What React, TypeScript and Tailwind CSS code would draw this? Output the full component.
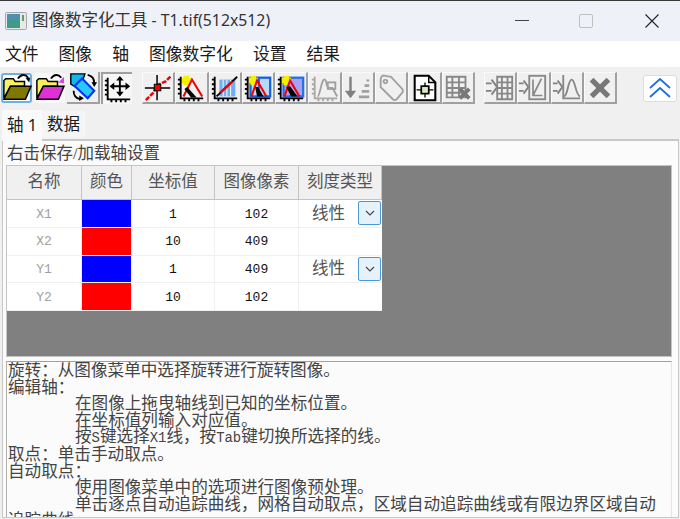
import React from 'react';

const SONG = "font-['Liberation_Serif','Noto_Sans_CJK_SC',serif]";
const COLON = '\uFF1A';
const COMMA = '\uFF0C';

const Axes = ({ c = '#000' }: { c?: string }) => (
  <path d="M5 4V27H29M2 7H5M2 12H5M2 17H5M2 22H5M9 30V27M14 30V27M19 30V27M24 30V27" fill="none" stroke={c} strokeWidth="2" />
);
const Sun = () => <path d="M8 3h6v2h2v6h-2v2H8v-2H6V5h2z" fill="#f4f000" />;

const icons: Record<string, React.ReactNode> = {
  open: (
    <>
      <path d="M17 6C20 1 25 1 28 5" fill="none" stroke="#000" strokeWidth="2" />
      <path d="M25 5h5l-1 5z" fill="#000" />
      <path d="M2 27V8l2-2h8l2 3h10v5H9L2 27z" fill="#f8f060" stroke="#000" strokeWidth="1.6" />
      <path d="M2 28 9 14h22l-6 14z" fill="#807800" stroke="#000" strokeWidth="1.6" />
    </>
  ),
  save: (
    <>
      <path d="M17 6C20 1 25 1 28 5" fill="none" stroke="#000" strokeWidth="2" />
      <path d="M31 4v7l-6-1z" fill="#e040e0" />
      <path d="M2 27V8l2-2h8l2 3h10v5H9L2 27z" fill="#f8f060" stroke="#000" strokeWidth="1.6" />
      <path d="M2 28 9 14h22l-6 14z" fill="#e030d8" stroke="#000" strokeWidth="1.6" />
    </>
  ),
  rotate: (
    <>
      <path d="M3 2h15l-3 9-7 5-5-3z" fill="#10b8f0" stroke="#000" strokeWidth="1.5" />
      <path d="M15 7l13 13-7 8L7 15z" fill="#28c8f8" stroke="#0030f0" strokeWidth="2.2" />
      <path d="M21 3c5 1 7 4 7 9M6 20c0 4 2 8 7 9" fill="none" stroke="#000" strokeWidth="2" />
      <path d="M25 11h6l-3 5zM12 25v6l5-3z" fill="#000" />
    </>
  ),
  move: (
    <>
      <Axes />
      <path d="M18 4v18M9 13h18" stroke="#000" strokeWidth="2" />
      <path d="M18 2l4 5h-8zM18 24l4-5h-8zM7 13l5-4v8zM29 13l-5-4v8z" fill="#000" />
    </>
  ),
  cross: (
    <>
      <path d="M3 29 11 21 15 13 24 9 30 3" fill="none" stroke="#f00000" strokeWidth="2.6" strokeDasharray="5 1.5" />
      <path d="M15 2v27M2 16h27" stroke="#000" strokeWidth="1.6" />
      <rect x="12" y="12" width="7" height="7" fill="#f00000" stroke="#000" />
    </>
  ),
  peak: (
    <>
      <Sun />
      <Axes />
      <path d="M8 25 17 7l11 18" fill="none" stroke="#f00000" strokeWidth="2.2" />
      <path d="M9 17l3-2 10 11h-6z" fill="#000" />
    </>
  ),
  grid: (
    <>
      <rect x="10" y="7" width="17" height="18" fill="#70b0f0" />
      <path d="M14 7v18M18 7v18M22 7v18" stroke="#fff" strokeWidth="1" />
      <Axes />
      <path d="M7 25 29 4" stroke="#000" strokeWidth="2" />
      <path d="M11 21 24 9" stroke="#f00000" strokeWidth="2.6" />
    </>
  ),
  peakBox: (
    <>
      <rect x="8" y="5" width="21" height="20" fill="#b8d8f8" stroke="#1060e0" strokeWidth="2.4" />
      <path d="M17 5v20" stroke="#1060e0" strokeWidth="2" />
      <Sun />
      <Axes />
      <path d="M9 25 15 8l10 17" fill="none" stroke="#f00000" strokeWidth="2.2" />
      <path d="M13 15l3 0 6 10h-7z" fill="#000" />
    </>
  ),
  peakFill: (
    <>
      <rect x="8" y="5" width="21" height="20" fill="#a8a0f0" stroke="#2070e8" strokeWidth="2.4" />
      <Sun />
      <Axes />
      <path d="M9 25 15 8l10 17" fill="none" stroke="#f00000" strokeWidth="2.2" />
      <path d="M11 15l4-1 8 11h-7z" fill="#000" />
    </>
  ),
  curveOff: (
    <>
      <Axes c="#a8a8a8" />
      <path d="M8 25C11 25 12 5 16 7c2 1 1 8 4 9h4l5 9" fill="none" stroke="#a0a0a0" strokeWidth="2" />
      <rect x="19" y="10" width="8" height="7" fill="none" stroke="#a0a0a0" strokeWidth="2" />
    </>
  ),
  sort: (
    <>
      <path d="M8 4v21" stroke="#808080" strokeWidth="2.6" />
      <path d="M2 19l6 8 6-8z" fill="#808080" />
      <path d="M25 7h3v2h-3zM23 12h5v3h-5zM20 18h8v3h-8zM17 24h11v3H17z" fill="#a0a0a0" />
    </>
  ),
  tag: (
    <path d="M5 7c0-3 2-5 5-4l6 1 12 13c1 2 1 3 0 4l-6 7c-1 1-3 1-4 0L5 15zM10 7a2 2 0 1 0 .1 0" fill="none" stroke="#a0a0a0" strokeWidth="2" />
  ),
  doc: (
    <>
      <path d="M5 3h15l7 7v19H5z" fill="#fff" stroke="#000" strokeWidth="2.2" />
      <path d="M20 3v7h7" fill="none" stroke="#000" strokeWidth="1.6" />
      <path d="M16 10v16M7 18h18" stroke="#000" strokeWidth="1.4" />
      <rect x="12" y="14" width="8" height="8" fill="#d8e8c0" stroke="#000" strokeWidth="1.8" />
    </>
  ),
  gridX: (
    <>
      <path d="M4 4h20v22H4zM4 10h20M4 16h20M4 21h20M10 4v22M17 4v22" fill="none" stroke="#888" strokeWidth="2" />
      <path d="M18 17l10 10M28 17 18 27" stroke="#787878" strokeWidth="4" />
    </>
  ),
  inGrid: (
    <>
      <path d="M1 11h6M1 19h6M7 7l6 8-6 8" fill="none" stroke="#808080" strokeWidth="2" />
      <path d="M13 4h16v24H13zM13 10h16M13 16h16M13 22h16M18 4v24M24 4v24" fill="none" stroke="#888" strokeWidth="2" />
    </>
  ),
  inLine: (
    <>
      <path d="M1 11h5M1 19h5M6 8l5 7-5 7" fill="none" stroke="#808080" strokeWidth="2" />
      <rect x="12" y="3" width="17" height="25" fill="#f0f0f0" stroke="#888" strokeWidth="2" />
      <path d="M16 24 25 6M16 7v17h10" fill="none" stroke="#888" strokeWidth="1.8" />
    </>
  ),
  inPeak: (
    <>
      <path d="M1 11h5M1 19h5M6 8l5 7-5 7" fill="none" stroke="#808080" strokeWidth="2" />
      <path d="M12 2v25h18" fill="none" stroke="#888" strokeWidth="2" />
      <path d="M13 25c4-1 4-18 8-18s4 17 9 18" fill="none" stroke="#888" strokeWidth="2" />
    </>
  ),
  close: <path d="M7 7l18 18M25 7 7 25" stroke="#787878" strokeWidth="5.5" />,
};

const Icon = ({ name }: { name: string }) => (
  <svg viewBox="0 0 32 32" className="h-[30px] w-[30px] shrink-0">{icons[name]}</svg>
);

const Tool = ({ name }: { name: string }) => (
  <div className="flex h-[32px] w-[33.3px] items-center justify-center border-b-2 border-l border-r-2 border-t border-b-[#a0a0a0] border-l-[#fafafa] border-r-[#a0a0a0] border-t-[#fafafa] bg-[#f0f0f0]">
    <Icon name={name} />
  </div>
);

const Latin = ({ children }: { children: React.ReactNode }) => (
  <span className="font-['Liberation_Mono'] text-[13.9px]">{children}</span>
);

const rows = [
  { name: 'X1', color: 'bg-[#0000ff]', value: '1', pixel: '102', scale: true },
  { name: 'X2', color: 'bg-[#ff0000]', value: '10', pixel: '409', scale: false },
  { name: 'Y1', color: 'bg-[#0000ff]', value: '1', pixel: '409', scale: true },
  { name: 'Y2', color: 'bg-[#ff0000]', value: '10', pixel: '102', scale: false },
];

const headers = ['名称', '颜色', '坐标值', '图像像素', '刻度类型'];

export default function App() {
  return (
    <div className="flex h-[519px] w-[680px] flex-col overflow-hidden bg-[#f0f0f0] font-['Noto_Sans','Noto_Sans_CJK_SC',sans-serif] text-[16.5px] text-[#1a1a1a]">
      {/* title bar */}
      <div className="flex h-[41px] shrink-0 items-center border-t border-[#3a3a3a] bg-[#eff1f9] pb-[1px] pl-[5px]">
        <svg viewBox="0 0 22 18" className="h-[18px] w-[22px]">
          <rect x="0.5" y="0.5" width="21" height="17" rx="1" fill="#e8e8e8" stroke="#a8a8a8" />
          <rect x="2" y="2" width="13" height="14" fill="#3f9a88" />
          <rect x="2" y="2" width="13" height="6" fill="#4f8fb0" />
          <rect x="17" y="3" width="2" height="6" fill="#6a9a60" />
        </svg>
        <span className="ml-[5px] leading-none text-[#333]">
          图像数字化工具<span className="text-[15.8px]"> - T1.tif(512x512)</span>
        </span>
        <div className="ml-auto flex items-center">
          <div className="mr-[50px] h-px w-[14px] bg-[#444]" />
          <div className="mr-[52px] h-[14px] w-[14px] rounded-[2px] border border-[#c0c0c0]" />
          <svg viewBox="0 0 14 14" className="mr-[21px] h-[14px] w-[14px]">
            <path d="M0.5 0.5l13 13M13.5 0.5l-13 13" stroke="#222" strokeWidth="1.1" />
          </svg>
        </div>
      </div>

      {/* menu */}
      <div className="flex h-[26px] shrink-0 items-center gap-[20px] bg-white pl-[5px] text-[16.8px] leading-none">
        {['文件', '图像', '轴', '图像数字化', '设置', '结果'].map(m => (
          <span key={m}>{m}</span>
        ))}
      </div>

      {/* toolbar */}
      <div className="flex h-[41px] shrink-0 items-center pl-[1px] pt-[1px]">
        <div className="flex h-[30px] w-[31px] items-center justify-center rounded-[3px] border-2 border-[#6cb0e4] bg-white">
          <Icon name="open" />
        </div>
        <div className="ml-[2px] flex h-[30px] w-[31px] items-center justify-center rounded-[3px] bg-[#f8f8f8]">
          <Icon name="save" />
        </div>
        <div className="ml-[2px] flex h-[32px] w-[33px] items-center justify-center border-b-2 border-r-2 border-[#a0a0a0]">
          <Icon name="rotate" />
        </div>
        <div className="ml-[1px] flex h-[32px] w-[31px] items-center justify-center border-l-2 border-t-2 border-[#a0a0a0] bg-[#f6f6f6]">
          <Icon name="move" />
        </div>
        <div className="ml-[10px] flex">
          {['cross', 'peak', 'grid', 'peakBox', 'peakFill', 'curveOff', 'sort', 'tag', 'doc', 'gridX'].map(n => (
            <Tool key={n} name={n} />
          ))}
        </div>
        <div className="ml-[9px] flex">
          {['inGrid', 'inLine', 'inPeak', 'close'].map(n => (
            <Tool key={n} name={n} />
          ))}
        </div>
        <div className="ml-[26px] flex h-[27px] w-[34px] items-center justify-center rounded-[3px] border border-[#dcdcdc] bg-white">
          <svg viewBox="0 0 24 20" className="h-[20px] w-[24px]">
            <path d="M2 10 12 1l10 9M2 19 12 10l10 9" fill="none" stroke="#1a6fe0" strokeWidth="1.8" />
          </svg>
        </div>
      </div>

      {/* tabs */}
      <div className="flex h-[31px] shrink-0 items-end pl-[2px]">
        <div className="z-10 -mb-[2px] flex h-[31px] w-[40px] items-center justify-center bg-[#fafafa] leading-none">轴 1</div>
        <div className="mb-[1px] flex h-[27px] w-[43px] items-center justify-center bg-[#f5f5f5] leading-none">数据</div>
      </div>

      {/* tab page */}
      <div className={`mb-[1px] ml-[2px] mr-[1px] flex min-h-0 flex-1 flex-col border-x border-b border-t-2 border-[#c8c8c8] bg-[#fbfbfb] px-[3px] ${SONG}`}>
        <div className="h-[24px] shrink-0 pl-[1px] pt-[3px] leading-[20px] text-[#444]">右击保存/加载轴设置</div>

        <div className="h-[192px] w-[666px] shrink-0 border border-[#c4c4c4] bg-[#808080]">
          <div className="grid w-[375px] grid-cols-[75px_50px_83px_84px_83px] grid-rows-[34px_27.75px_27.75px_27.75px_27.75px] bg-white">
            {headers.map(h => (
              <div key={h} className="flex items-center justify-center border-b border-r border-[#c4c4c4] bg-[#f0f0f0] text-[#555]">{h}</div>
            ))}
            {rows.map(r => (
              <React.Fragment key={r.name}>
                <div className="flex items-center justify-center border-b border-r border-[#f0f0f0] pt-[2px] font-['Liberation_Mono'] text-[13px] text-[#a0a0a0]">{r.name}</div>
                <div className={`border-b border-r border-[#f0f0f0] ${r.color}`} />
                <div className="flex items-center justify-center border-b border-r border-[#f0f0f0] pt-[2px] font-['Liberation_Mono'] text-[13px] text-[#111]">{r.value}</div>
                <div className="flex items-center justify-center border-b border-r border-[#f0f0f0] pt-[2px] font-['Liberation_Mono'] text-[13px] text-[#111]">{r.pixel}</div>
                <div className="flex items-center border-b border-[#f0f0f0] pl-[13px] text-[#555]">
                  {r.scale && (
                    <>
                      <span className="pt-[1px]">线性</span>
                      <span className="ml-[13px] flex h-[24px] w-[23px] items-center justify-center rounded-[2px] border border-[#4a98d8] bg-[#e5f1fb]">
                        <svg viewBox="0 0 10 6" className="h-[6px] w-[10px]">
                          <path d="M1 1l4 4 4-4" fill="none" stroke="#444" strokeWidth="1.1" />
                        </svg>
                      </span>
                    </>
                  )}
                </div>
              </React.Fragment>
            ))}
          </div>
        </div>

        <div className="mt-[4px] min-h-0 w-[666px] flex-1 overflow-hidden border-l border-r border-t border-l-[#b0b0b0] border-r-[#e4e4e4] border-t-[#a0a0a0] pl-[1px] pt-[1px] text-[16.6px] leading-[16.6px] text-[#444]">
          <div>旋转{COLON}从图像菜单中选择旋转进行旋转图像。</div>
          <div>编辑轴{COLON}</div>
          <div className="pl-[67px]">在图像上拖曳轴线到已知的坐标位置。</div>
          <div className="pl-[67px]">在坐标值列输入对应值。</div>
          <div className="pl-[67px]">按<Latin>S</Latin>键选择<Latin>X1</Latin>线{COMMA}按<Latin>Tab</Latin>键切换所选择的线。</div>
          <div>取点{COLON}单击手动取点。</div>
          <div>自动取点{COLON}</div>
          <div className="pl-[67px]">使用图像菜单中的选项进行图像预处理。</div>
          <div className="pl-[67px]">单击逐点自动追踪曲线{COMMA}网格自动取点{COMMA}区域自动追踪曲线或有限边界区域自动</div>
          <div>追踪曲线。</div>
        </div>
      </div>
    </div>
  );
}
